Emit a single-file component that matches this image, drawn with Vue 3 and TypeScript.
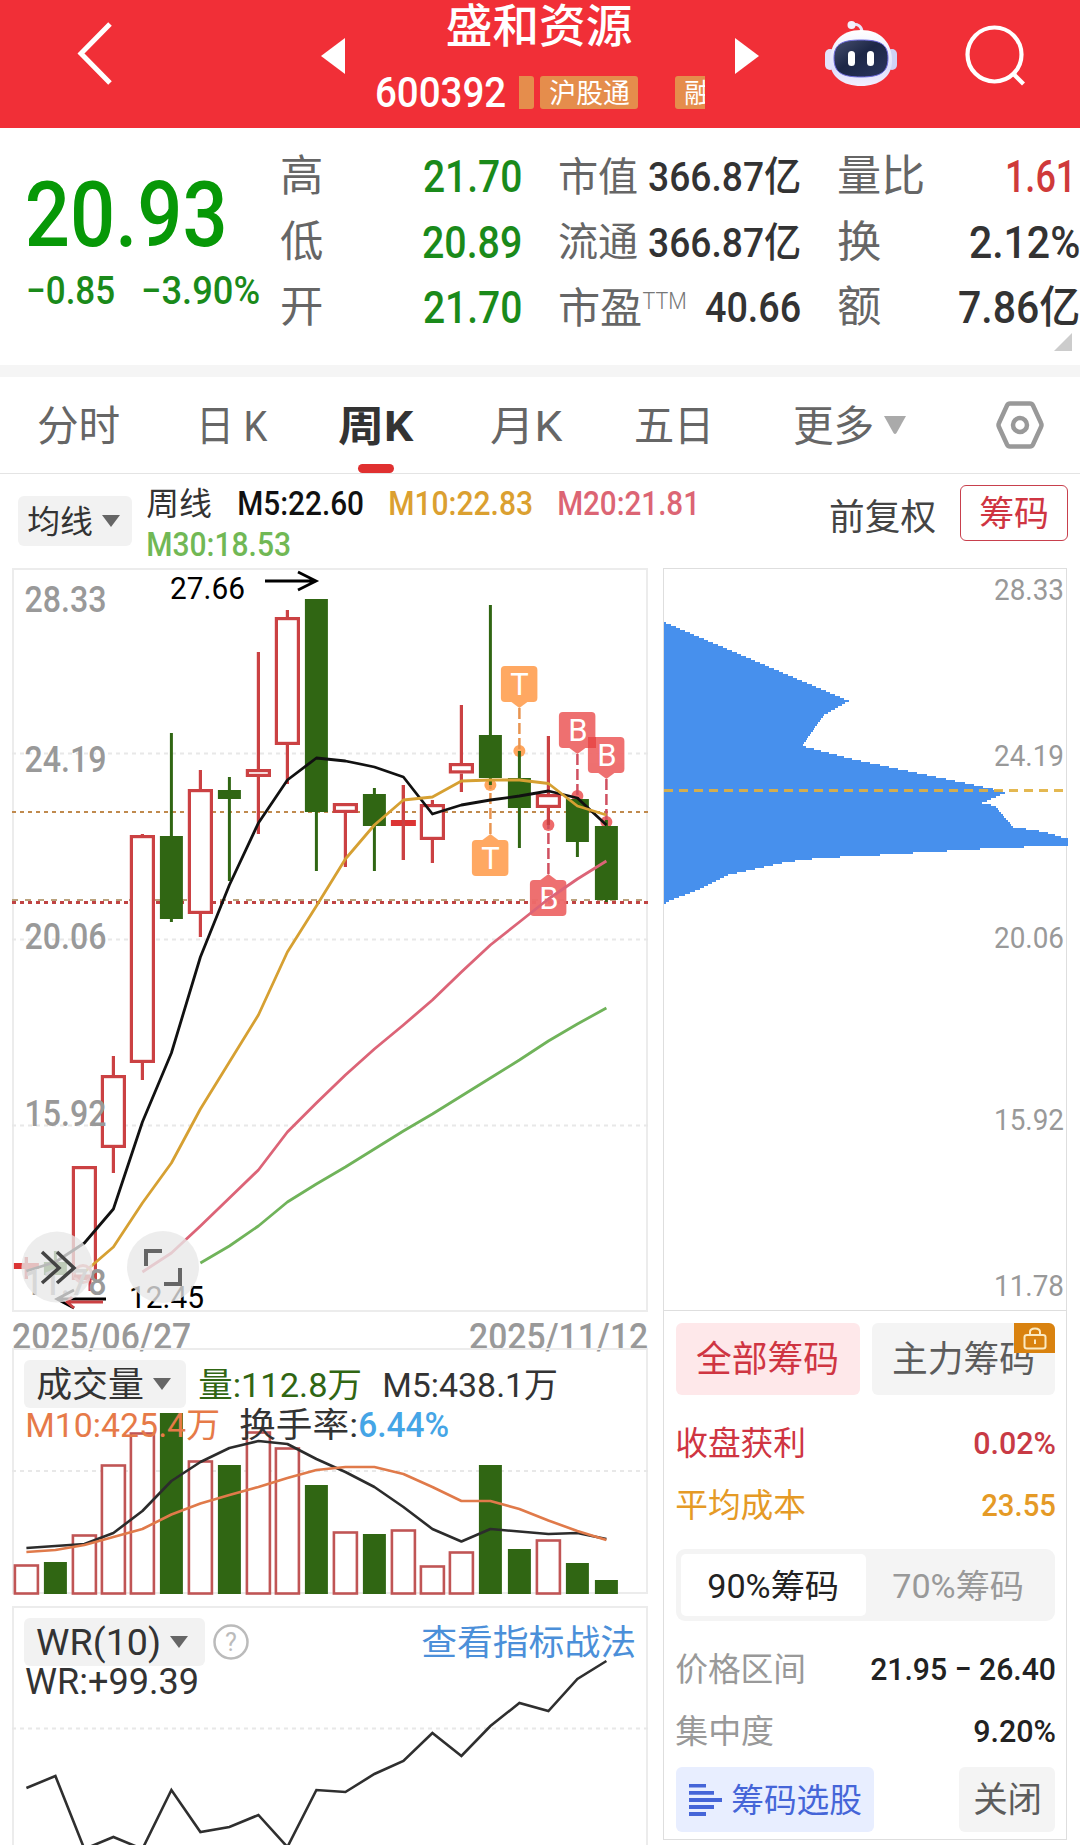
<script setup lang="ts">
import { h } from 'vue'

interface TxtProps { t: string; w: number; s: number; c?: string; b?: number | string }

/* One line of text set to a fixed ink width, centred on its glyph height. */
const Txt = (p: TxtProps) => {
  const cjk = /[\u4e00-\u9fff]/.test(p.t)
  return h('svg', { class: 'txt', width: p.w, height: p.s }, [
    h('text', {
      x: -0.025 * p.s,
      y: p.s * (cjk ? 0.87 : 0.864),
      textLength: p.w + 0.055 * p.s,
      lengthAdjust: 'spacingAndGlyphs',
      'font-size': p.s,
      'font-weight': p.b ?? 400,
      fill: p.c ?? '#333',
    }, p.t),
  ])
}
Txt.props = ['t', 'w', 's', 'c', 'b']

const RED = '#cb4143'
const GREEN = '#306613'
const cx = (i: number) => 26.4 + 29 * i

type Candle = [up: boolean, hi: number, top: number, bottom: number, lo: number]
const candles: Candle[] = [
  [true, 1257, 1263, 1269, 1279], [false, 1251, 1262, 1275, 1275], [true, 1166, 1166, 1280, 1280],
  [true, 1056, 1075, 1148, 1173], [true, 834, 835, 1063, 1080], [false, 733, 836, 919, 922],
  [true, 770, 789, 914, 937], [false, 777, 790, 799, 881], [true, 652, 769, 777, 834],
  [true, 610, 617, 745, 784], [false, 599, 599, 812, 871], [true, 803, 803, 813, 867],
  [false, 788, 794, 826, 871], [true, 785, 820, 826, 860], [true, 800, 804, 840, 863],
  [true, 705, 763, 773.5, 792], [false, 605, 735, 778, 785], [false, 751, 778, 808, 848],
  [true, 736, 794, 808, 825], [false, 797, 799, 842, 857], [false, 820, 826, 900, 902],
]

const line = (ys: number[], start = 0) => ys.map((y, i) => `${cx(i + start)},${y}`).join(' ')
const ma5 = line([1271, 1262, 1243, 1209, 1122, 1053, 957, 885, 823, 780, 758, 761, 767, 777, 814, 805, 800, 796, 791, 798, 825])
const ma10 = line([1272, 1247, 1203, 1163, 1109, 1062, 1015, 952, 906, 859, 825, 800, 797, 781, 780, 780, 783.5, 806, 815], 2)
const ma20 = line([1272, 1253, 1226, 1198, 1170, 1132, 1103, 1075, 1049, 1025, 1000, 972, 945, 922, 899, 879, 861], 4)
const ma30 = line([1263, 1246, 1226, 1202, 1184, 1167, 1149, 1131, 1114, 1096, 1078, 1060, 1041, 1024, 1008], 6)

const priceLabels: [string, number][] = [['28.33', 611], ['24.19', 771], ['20.06', 948], ['15.92', 1125], ['11.78', 1294]]
const chipLabels: [string, number][] = [['28.33', 599], ['24.19', 765], ['20.06', 947], ['15.92', 1129], ['11.78', 1295]]

interface Mark { k: string; i: number; top: number; dot: number }
const marks: Mark[] = [
  { k: 'T', i: 17, top: 666, dot: 751 }, { k: 'T', i: 16, top: 840, dot: 785 },
  { k: 'B', i: 19, top: 712, dot: 796 }, { k: 'B', i: 20, top: 737, dot: 822 },
  { k: 'B', i: 18, top: 880, dot: 825 },
]
const markColor = (m: Mark) => (m.k === 'T' ? '#ffa55c' : '#ee6b6b')
const below = (m: Mark) => m.dot < m.top
const tip = (m: Mark) => (below(m) ? m.top - 6 : m.top + 42)
const pointer = (m: Mark) => {
  const x = cx(m.i)
  const y = below(m) ? m.top : m.top + 36
  return `${x - 8},${y} ${x},${tip(m)} ${x + 8},${y}`
}

const volumes: [boolean, number][] = [
  [true, 1565], [false, 1562], [true, 1535], [true, 1465], [true, 1433], [false, 1413], [true, 1461],
  [false, 1465], [true, 1432], [true, 1448], [false, 1485], [true, 1532], [false, 1534], [true, 1530],
  [true, 1566], [true, 1552], [false, 1465], [false, 1549], [true, 1540], [false, 1563], [false, 1580],
]
const vol5 = line([1548, 1546, 1544, 1533, 1511, 1481, 1462, 1448, 1441, 1444, 1459, 1472, 1487, 1507, 1529, 1541.5, 1529, 1531.5, 1534, 1533, 1539])
const vol10 = line([1552, 1550, 1545, 1537, 1529, 1514.5, 1503.5, 1495, 1487, 1478, 1470, 1467, 1467, 1474, 1487, 1501, 1501, 1509, 1520.5, 1531, 1540])
const wr = line([1788, 1776, 1849, 1837, 1849, 1790, 1832, 1827, 1815, 1847, 1790, 1792, 1774, 1761, 1733, 1756, 1726, 1703, 1711, 1679, 1661])

/* Chip distribution: outline nodes turned into two-pixel rows. */
const chipNodes: [number, number][] = [
  [664, 622], [849, 701], [824, 715], [802, 746], [856, 760], [1007, 792], [982, 803], [995, 806], [1013, 827],
  [1045, 832], [1068, 839], [1068, 845], [980, 849], [880, 855], [820, 858], [786, 862], [728, 875], [700, 889], [664, 903],
]
const chipX = (y: number) => {
  for (let i = 1; i < chipNodes.length; i++) {
    const [x0, y0] = chipNodes[i - 1]
    const [x1, y1] = chipNodes[i]
    if (y <= y1) return x0 + ((x1 - x0) * (y - y0)) / (y1 - y0)
  }
  return 664
}
const chipRows = Array.from({ length: 141 }, (_, i) => 622 + i * 2).map((y) => ({ y, w: Math.max(2, chipX(y + 1) - 664) }))

const tabs = [
  { t: '分时', x: 38, w: 81 }, { t: '日 K', x: 197, w: 69 }, { t: '周K', x: 339, w: 73, on: true },
  { t: '月K', x: 491, w: 70 }, { t: '五日', x: 635, w: 78 }, { t: '更多', x: 794, w: 79, more: true },
]
const tabGap = (i: number) => tabs[i].x - (i ? tabs[i - 1].x + tabs[i - 1].w : 0)
</script>

<template>
  <main class="app">
    <header class="head">
      <svg class="back" width="40" height="68" viewBox="0 0 40 68"><path d="M37 4 8 33.500 37 63" fill="none" stroke="#fff" stroke-width="5" /></svg>
      <svg class="prev" width="24" height="36" viewBox="0 0 24 36"><path d="M24 0V36L0 18z" fill="#fff" /></svg>
      <div class="stock">
        <div class="name"><Txt t="盛和资源" :w="184" :s="46" c="#fff" b="500" /></div>
        <div class="code">
          <Txt t="600392" :w="129" :s="42" c="#fff" b="500" />
          <i class="tag stub" />
          <span class="tag full"><Txt t="沪股通" :w="79" :s="27" c="#fff" /></span>
          <span class="tag cut"><Txt t="融" :w="25" :s="27" c="#fff" /></span>
        </div>
      </div>
      <svg class="next" width="24" height="36" viewBox="0 0 24 36"><path d="M0 0V36L24 18z" fill="#fff" /></svg>
      <svg class="robot" width="72" height="68" viewBox="0 0 72 68">
        <defs>
          <linearGradient id="shell" x1="0" y1="0" x2="0" y2="1"><stop offset="0" stop-color="#fff" /><stop offset=".7" stop-color="#dfe0fb" /><stop offset="1" stop-color="#f3efff" /></linearGradient>
          <linearGradient id="face" x1="0" y1="0" x2="1" y2="1"><stop offset="0" stop-color="#48506f" /><stop offset=".45" stop-color="#1d2747" /><stop offset="1" stop-color="#2b355f" /></linearGradient>
        </defs>
        <path d="M27 4.500c6-1 10 2 10 8" fill="none" stroke="#e9e4f7" stroke-width="3" />
        <circle cx="26.500" cy="5" r="4" fill="#f4f0fc" />
        <rect x="0" y="29" width="10" height="21" rx="5" fill="#e4e3fb" />
        <rect x="62" y="29" width="10" height="21" rx="5" fill="#cfd2f6" />
        <path d="M36 10C56 10 67 23 67 41 67 57 54 66 36 66S5 57 5 41C5 23 16 10 36 10z" fill="url(#shell)" />
        <path d="M36 20C55 20 63 24 63 38S56 57 36 57 9 52 9 38 17 20 36 20z" fill="url(#face)" stroke="#6e6be0" stroke-width="1" />
        <rect x="23" y="31" width="7" height="15" rx="3.500" fill="#fff" />
        <rect x="42" y="31" width="7" height="15" rx="3.500" fill="#fff" />
      </svg>
      <svg class="search" width="62" height="62" viewBox="0 0 62 62"><circle cx="29.500" cy="29.500" r="27" fill="none" stroke="#fff" stroke-width="4.200" /><path d="M48 48.500 58.500 59" stroke="#fff" stroke-width="4.200" /></svg>
    </header>

    <section class="quote">
      <div class="price">
        <Txt t="20.93" :w="198" :s="91" c="#079807" b="500" />
        <div class="change"><Txt t="−0.85" :w="87" :s="39" c="#1a8a1a" b="500" /><Txt t="−3.90%" :w="117" :s="39" c="#1a8a1a" b="500" /></div>
      </div>
      <dl class="cells hl">
        <div><Txt t="高" :w="41" :s="43" c="#666" /><Txt t="21.70" :w="97" :s="45" c="#1a8a1a" b="500" /></div>
        <div><Txt t="低" :w="41" :s="43" c="#666" /><Txt t="20.89" :w="98" :s="45" c="#1a8a1a" b="500" /></div>
        <div><Txt t="开" :w="41" :s="43" c="#666" /><Txt t="21.70" :w="97" :s="45" c="#1a8a1a" b="500" /></div>
      </dl>
      <dl class="cells cap">
        <div><Txt t="市值" :w="78" :s="40" c="#666" /><Txt t="366.87亿" :w="151" :s="41" b="500" /></div>
        <div><Txt t="流通" :w="78" :s="40" c="#666" /><Txt t="366.87亿" :w="151" :s="41" b="500" /></div>
        <div><span class="ttm"><Txt t="市盈" :w="82" :s="42" c="#666" /><Txt class="sup" t="TTM" :w="43" :s="23" c="#777" b="300" /></span><Txt t="40.66" :w="94" :s="43" b="500" /></div>
      </dl>
      <dl class="cells rate">
        <div><Txt t="量比" :w="86" :s="43" c="#666" /><Txt class="vr" t="1.61" :w="69" :s="45" c="#cf3a3a" b="500" /></div>
        <div><Txt t="换" :w="42" :s="43" c="#666" /><Txt t="2.12%" :w="109" :s="45" b="500" /></div>
        <div><Txt t="额" :w="42" :s="43" c="#666" /><Txt t="7.86亿" :w="120" :s="44" b="500" /></div>
      </dl>
      <i class="fold" />
    </section>

    <nav class="tabs">
      <span v-for="(t, i) in tabs" :key="t.t" class="tab" :class="{ on: t.on }" :style="{ marginLeft: tabGap(i) + 'px' }">
        <Txt :t="t.t" :w="t.w" :s="42" :c="t.on ? '#333' : '#666'" :b="t.on ? 700 : 400" />
      </span>
      <svg class="more" width="22" height="18" viewBox="0 0 22 18"><path d="M0 0H22L12.500 17Q11 19 9.500 17z" fill="#aaa" /></svg>
      <svg class="hex" width="50" height="50" viewBox="0 0 50 50"><path d="M15 3.500H35Q37 3.500 38 5.500L46 23Q47 25 46 27L38 44.500Q37 46.500 35 46.500H15Q13 46.500 12 44.500L4 27Q3 25 4 23L12 5.500Q13 3.500 15 3.500z" fill="none" stroke="#999" stroke-width="4.500" /><circle cx="25" cy="25" r="7" fill="none" stroke="#999" stroke-width="4.500" /></svg>
    </nav>

    <section class="ma">
      <span class="pick"><Txt t="均线" :w="64" :s="32" /><i class="caret" /></span>
      <div class="legend">
        <div><Txt t="周线" :w="64" :s="32" /><Txt class="m5" t="M5:22.60" :w="125" :s="34" c="#111" b="500" /><Txt class="m10" t="M10:22.83" :w="143" :s="34" c="#dba030" b="500" /><Txt class="m10" t="M20:21.81" :w="141" :s="34" c="#dc6574" b="500" /></div>
        <div><Txt t="M30:18.53" :w="143" :s="34" c="#71b855" b="500" /></div>
      </div>
      <span class="adj"><Txt t="前复权" :w="105" :s="36" c="#444" /></span>
      <span class="chip-btn"><Txt t="筹码" :w="68" :s="35" c="#cf3542" /></span>
    </section>

    <div class="body">
      <div class="left">
        <svg class="kline" width="648" height="758" viewBox="0 562 648 758">
          <rect x="13" y="569" width="634" height="742" fill="none" stroke="#ececec" stroke-width="2" />
          <path d="M12 753.500H648M12 939.500H648M12 1125.500H648" class="grid" />
          <path d="M12 812H648" stroke="#c08a4e" stroke-width="2" stroke-dasharray="4 4" />
          <path d="M12 900H648" stroke="#b9a27c" stroke-width="2" stroke-dasharray="6 7" />
          <path d="M12 902.500H648" stroke="#c04444" stroke-width="3" stroke-dasharray="4 4" />

          <g v-for="(m, i) in marks" :key="'l' + i">
            <circle :cx="cx(m.i)" :cy="m.dot" r="6" :fill="markColor(m)" />
            <path :d="`M${cx(m.i)} ${tip(m)}V${m.dot}`" :stroke="m.k === 'T' ? '#e89450' : '#d05060'" stroke-width="2.500" stroke-dasharray="11 4" />
          </g>

          <g v-for="(c, i) in candles" :key="i">
            <template v-if="c[0]">
              <path :d="`M${cx(i)} ${c[1]}V${c[2]}M${cx(i)} ${c[3]}V${c[4]}`" :stroke="RED" stroke-width="3.200" />
              <rect v-if="c[3] - c[2] > 6" :x="cx(i) - 11" :y="c[2] + 1.6" width="22" :height="c[3] - c[2] - 3.2" fill="#fff" :stroke="RED" stroke-width="3.200" />
              <rect v-else :x="cx(i) - 12.5" :y="c[2]" width="25" height="6" fill="#dc3535" />
              <path v-if="c[3] - c[2] <= 6" :d="`M${cx(i)} ${c[1]}V${c[4]}`" :stroke="RED" stroke-width="3.200" />
            </template>
            <template v-else>
              <path :d="`M${cx(i)} ${c[1]}V${c[4]}`" :stroke="GREEN" stroke-width="3" />
              <rect :x="cx(i) - 11.500" :y="c[2]" width="23" :height="c[3] - c[2]" :fill="GREEN" />
            </template>
          </g>

          <g v-for="(m, i) in marks" :key="'b' + i">
            <g :fill="markColor(m)" opacity=".96">
              <rect :x="cx(m.i) - 18.500" :y="m.top" width="36.500" height="36" rx="4" />
              <polygon :points="pointer(m)" />
            </g>
            <text :x="cx(m.i) + (m.k === 'B' ? 0.5 : 0)" :y="m.top + 29" text-anchor="middle" font-size="31" fill="#fff">{{ m.k }}</text>
          </g>
          <rect x="588" y="737" width="8" height="11" fill="#e94b4b" />

          <g fill="none" stroke-width="2.800" stroke-linejoin="round">
            <polyline :points="ma5" stroke="#111" />
            <polyline :points="ma10" stroke="#d6a032" />
            <polyline :points="ma20" stroke="#dc6477" />
            <polyline :points="ma30" stroke="#70b35a" />
          </g>

          <circle cx="83" cy="1274" r="8.500" fill="none" stroke="#e58a8a" stroke-width="3" />
          <path d="M74 1276H92M90 1276V1291" fill="none" stroke="#cb4143" stroke-width="3" />

          <g fill="#999" font-size="36" font-weight="500">
            <text v-for="l in priceLabels" :key="l[0]" x="24.500" :y="l[1] + 0.5" textLength="82" lengthAdjust="spacingAndGlyphs">{{ l[0] }}</text>
          </g>
          <g font-size="31" fill="#000">
            <text x="170" y="598.500" textLength="75" lengthAdjust="spacingAndGlyphs">27.66</text>
            <text x="129" y="1307.500" textLength="75" lengthAdjust="spacingAndGlyphs">12.45</text>
          </g>
          <path d="M265 581H316M298 572 316 581 298 590" fill="none" stroke="#000" stroke-width="2.800" />
          <path d="M106 1299H58M74 1290 57 1299 74 1308" fill="none" stroke="#000" stroke-width="2.800" />
          <path d="M103 1302H68M72 1297 67 1302 74 1308" fill="none" stroke="#cb4143" stroke-width="2.800" />

          <circle cx="57" cy="1267" r="35.500" class="fab" />
          <circle cx="163" cy="1267" r="36" class="fab" />
          <path d="M42 1252 59 1268 42 1283M57 1252 74 1268 57 1283" fill="none" stroke="#444" stroke-width="3.500" />
          <path d="M146 1266V1251H162M164 1284H180V1268" fill="none" stroke="#666" stroke-width="4" />
        </svg>

        <div class="dates"><Txt t="2025/06/27" :w="177" :s="36" c="#999" b="500" /><Txt t="2025/11/12" :w="177" :s="36" c="#999" b="500" /></div>

        <div class="vol">
          <svg class="plot" width="648" height="248" viewBox="0 1348 648 248">
            <rect x="13" y="1349" width="634" height="244" fill="none" stroke="#ececec" stroke-width="2" />
            <path d="M12 1471H648" class="grid" />
            <template v-for="(v, i) in volumes" :key="i">
              <rect v-if="v[0]" :x="cx(i) - 11.500" :y="v[1] + 0.500" width="23" :height="1593 - v[1]" fill="#fff" stroke="#c05555" stroke-width="2.600" />
              <rect v-else :x="cx(i) - 11.500" :y="v[1]" width="23" :height="1594 - v[1]" :fill="GREEN" />
            </template>
            <g fill="none" stroke-width="2.600" stroke-linejoin="round"><polyline :points="vol5" stroke="#2c2c2c" /><polyline :points="vol10" stroke="#e07a4a" /></g>
          </svg>
          <div class="vrow one">
            <span class="pick"><Txt t="成交量" :w="106" :s="35" /><i class="caret" /></span>
            <Txt class="v1" t="量:112.8万" :w="162" :s="34" c="#306613" /><Txt class="v2" t="M5:438.1万" :w="174" :s="34" />
          </div>
          <div class="vrow two">
            <Txt t="M10:425.4万" :w="193" :s="34" c="#e67a48" /><Txt class="v3" t="换手率:" :w="117" :s="34" /><Txt class="v4" t="6.44%" :w="89" :s="35" c="#45a5e6" b="500" />
          </div>
        </div>

        <div class="wr">
          <svg class="plot" width="648" height="240" viewBox="0 1605 648 240">
            <path d="M13 1845V1607H647V1845" fill="none" stroke="#ececec" stroke-width="2" />
            <path d="M12 1728.500H648" class="grid" />
            <polyline :points="wr" fill="none" stroke="#2f2f2f" stroke-width="2.600" />
          </svg>
          <div class="wrow">
            <span class="pick"><Txt t="WR(10)" :w="123" :s="36" /><i class="caret" /></span>
            <svg class="help" width="36" height="36" viewBox="0 0 36 36"><circle cx="18" cy="18" r="16.500" fill="none" stroke="#bbb" stroke-width="2.500" /><text x="18" y="27" text-anchor="middle" font-size="25" fill="#bbb">?</text></svg>
            <Txt class="link" t="查看指标战法" :w="213" :s="35" c="#4b8fd9" />
          </div>
          <div class="wval"><Txt t="WR:+99.39" :w="172" :s="36" /></div>
        </div>
      </div>

      <aside class="right">
        <svg class="dist" width="406" height="742" viewBox="663 568 406 742">
          <g fill="#4790ed" shape-rendering="crispEdges"><rect v-for="r in chipRows" :key="r.y" x="664" :y="r.y" :width="r.w" height="2" /></g>
          <path d="M664 790.500H1063" stroke="#e2b13f" stroke-width="3" stroke-dasharray="9 6" opacity=".9" />
          <g fill="#999" font-size="29"><text v-for="l in chipLabels" :key="l[0]" x="994" :y="l[1] + 0.5" textLength="70" lengthAdjust="spacingAndGlyphs">{{ l[0] }}</text></g>
        </svg>
        <div class="stats">
          <div class="two-btn">
            <span class="all"><Txt t="全部筹码" :w="141" :s="36" c="#cf3542" /></span>
            <span class="main-chip"><Txt t="主力筹码" :w="141" :s="36" c="#5c5c5c" />
              <i class="lock"><svg width="24" height="23" viewBox="0 0 24 23"><path d="M7 8V5Q7 1.500 12 1.500T17 5V8M4 8H20Q22.500 8 22.500 10V19.500Q22.500 21.500 20 21.500H4Q1.500 21.500 1.500 19.500V10Q1.500 8 4 8zM12 12.500V17" fill="none" stroke="#fbe9c0" stroke-width="2" /></svg></i>
            </span>
          </div>
          <div class="kv first"><Txt t="收盘获利" :w="129" :s="33" c="#cf3542" /><Txt t="0.02%" :w="81" :s="32" c="#c83a45" b="500" /></div>
          <div class="kv"><Txt t="平均成本" :w="129" :s="33" c="#e59a26" /><Txt t="23.55" :w="73" :s="32" c="#e59a26" b="500" /></div>
          <div class="seg"><span class="on"><Txt t="90%筹码" :w="130" :s="33" c="#222" /></span><span><Txt t="70%筹码" :w="130" :s="33" c="#999" /></span></div>
          <div class="kv"><Txt t="价格区间" :w="129" :s="33" c="#999" /><Txt t="21.95 − 26.40" :w="184" :s="32" c="#222" b="500" /></div>
          <div class="kv"><Txt t="集中度" :w="97" :s="33" c="#999" /><Txt t="9.20%" :w="81" :s="32" c="#222" b="500" /></div>
          <div class="foot">
            <span class="select"><svg width="33" height="32" viewBox="0 0 33 32"><path d="M0 1.700H17M0 8.800H25M0 16H33M0 23H25M0 30H17" stroke="#4565d8" stroke-width="3.800" /></svg><Txt t="筹码选股" :w="129" :s="33" c="#4565d8" /></span>
            <span class="close"><Txt t="关闭" :w="67" :s="35" c="#5c5c5c" /></span>
          </div>
        </div>
      </aside>
    </div>
  </main>
</template>

<style>
body { margin: 0; background: #fff; }
</style>

<style scoped>
.app { width: 1080px; height: 1845px; overflow: hidden; background: #fff; font-family: Roboto, "Noto Sans CJK SC", sans-serif; }
.app svg { display: block; flex: none; }
.txt { overflow: visible; }
.txt :deep(text) { white-space: pre; }
i { display: block; }

.head { display: flex; height: 128px; background: #f12f37; }
.back { margin: 20px 0 0 73px; }
.prev { margin: 38px 0 0 208px; }
.stock { width: 329px; margin-left: 31px; padding-top: 2px; }
.name { padding-left: 71px; }
.code { display: flex; align-items: center; height: 34px; margin-top: 27px; }
.tag { display: flex; align-items: center; justify-content: center; flex: none; height: 33px; border-radius: 3px; background: #e58d4c; }
.stub { width: 15px; margin-left: 14px; border-radius: 0 3px 3px 0; }
.full { width: 98px; margin-left: 6px; }
.cut { box-sizing: border-box; width: 30px; margin-left: 37px; padding-left: 10px; justify-content: flex-start; overflow: hidden; border-radius: 3px 0 0 3px; }
.next { margin: 38px 0 0 30px; }
.robot { margin: 20px 0 0 66px; }
.search { margin: 25px 0 0 68px; }

.quote { position: relative; display: flex; height: 237px; border-bottom: 12px solid #f5f5f5; }
.price { width: 254px; padding: 39px 0 0 27px; }
.change { display: flex; gap: 28px; margin-top: 12px; }
.cells { display: flex; flex-direction: column; margin: 15px 0 0; }
.cells > div { display: flex; align-items: center; justify-content: space-between; height: 65.500px; }
.hl { width: 240px; }
.cap { width: 241px; margin-left: 38px; }
.rate { width: 241px; margin-left: 38px; }
.vr { margin-right: 4px; }
.ttm { display: flex; gap: 2px; }
.sup { margin-top: 3px; }
.fold { position: absolute; left: 1054px; top: 205px; border-left: 18px solid transparent; border-bottom: 18px solid #ccc; }

.tabs { display: flex; align-items: center; height: 96px; border-bottom: 1px solid #e4e4e4; }
.tab { position: relative; }
.tab.on::after { content: ""; position: absolute; left: 19px; top: 60px; width: 36px; height: 9px; border-radius: 5px; background: #e03030; }
.more { margin-left: 11px; }
.hex { margin-left: 89px; }

.ma { display: flex; height: 88px; }
.pick { display: flex; align-items: center; box-sizing: border-box; height: 50px; border-radius: 6px; background: #f2f2f2; }
.caret { width: 0; border: 9px solid transparent; border-top: 12px solid #666; border-bottom: 0; margin-left: 10px; }
.ma .pick { width: 114px; margin: 22px 0 0 18px; padding-left: 10px; }
.legend { width: 555px; margin: 9px 0 0 15px; }
.legend > div { display: flex; align-items: center; height: 41px; }
.legend > div:first-child { height: 40px; }
.m5 { margin-left: 27px; }
.m10 { margin-left: 26px; }
.adj { width: 105px; margin: 25px 0 0 128px; }
.chip-btn { display: flex; align-items: center; justify-content: center; box-sizing: border-box; width: 108px; height: 56px; margin: 11px 0 0 25px; border: 1.500px solid #c8404d; border-radius: 6px; }

.body { display: flex; }
.left { width: 648px; }
.kline { font-weight: 400; }
.grid { fill: none; stroke: #e8e8e8; stroke-width: 2; stroke-dasharray: 4 4; }
.fab { fill: rgba(232, 232, 232, .78); }
.dates { display: flex; justify-content: space-between; width: 634px; height: 28px; margin-left: 13px; align-items: center; padding-top: 3px; box-sizing: border-box; }
.vol { position: relative; height: 257px; }
.wr { position: relative; height: 240px; }
.plot { position: absolute; left: 0; top: 0; }
.vrow, .wrow, .wval { position: relative; display: flex; align-items: center; }
.vrow .pick { width: 162px; height: 48px; padding-left: 13px; }
.one { height: 48px; padding: 12px 0 0 24px; }
.two { height: 38px; margin-top: -3px; padding-left: 26px; }
.v1 { margin-left: 13px; }
.v2 { margin-left: 22px; }
.v3 { margin-left: 21px; }
.v4 { margin-left: 2px; }
.wrow { padding: 13px 0 0 24px; height: 48px; }
.wrow .pick { width: 181px; height: 48px; padding-left: 13px; }
.help { margin-left: 8px; }
.link { margin-left: 173px; }
.wval { padding-left: 26px; height: 30px; }

.right { width: 402px; height: 1270px; margin: 6px 0 0 15px; box-sizing: content-box; border: 1px solid #dedede; }
.dist { margin: -1px 0 0 -1px; }
.stats { box-sizing: border-box; border-top: 1px solid #dedede; padding: 12px 11px 0 12px; }
.two-btn { display: flex; gap: 12px; }
.two-btn > span { position: relative; display: flex; align-items: center; justify-content: center; height: 72px; flex: 1; border-radius: 6px; background: #f4f4f4; }
.two-btn .all { background: #fee8ea; }
.lock { position: absolute; right: 0; top: 0; display: flex; align-items: center; justify-content: center; width: 41px; height: 30px; border-radius: 0 6px 0 0; background: #d9820f; }
.kv { display: flex; align-items: center; justify-content: space-between; height: 62px; }
.first { margin-top: 16px; }
.seg { display: flex; box-sizing: border-box; height: 72px; margin: 14px 0 16px; padding: 5px; border-radius: 9px; background: #f4f4f4; }
.seg span { flex: 1; display: flex; align-items: center; justify-content: center; border-radius: 5px; }
.seg .on { background: #fff; }
.foot { display: flex; justify-content: space-between; margin-top: 6px; }
.foot span { display: flex; align-items: center; justify-content: center; height: 65px; border-radius: 6px; }
.select { width: 198px; gap: 10px; background: #e8eeff; }
.close { width: 96px; background: #f4f4f4; }
</style>
